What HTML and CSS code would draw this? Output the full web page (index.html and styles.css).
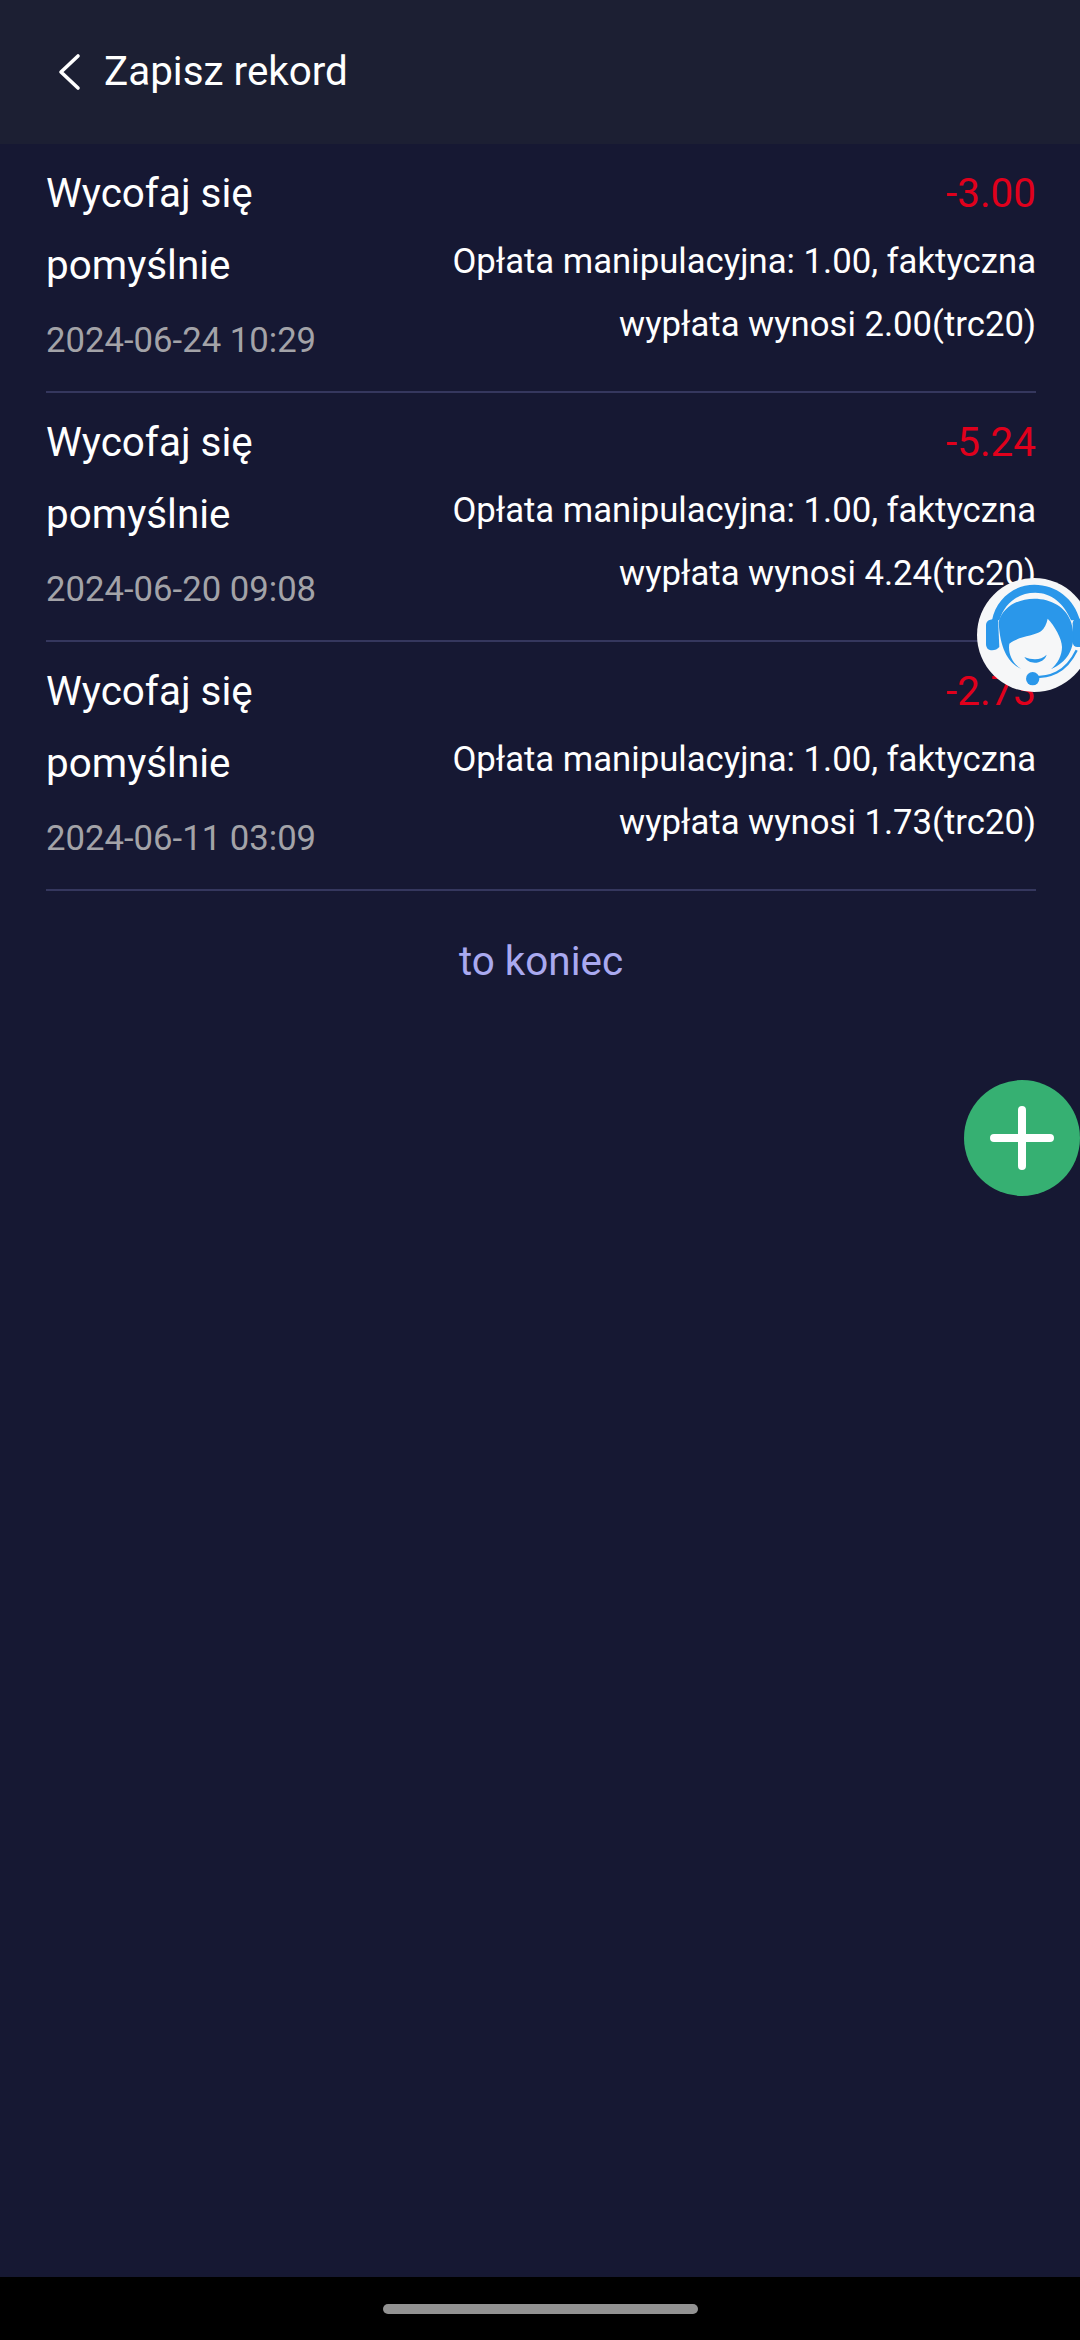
FILE: index.html
```html
<!DOCTYPE html>
<html lang="pl">
<head>
<meta charset="utf-8">
<title>Zapisz rekord</title>
<link rel="stylesheet" href="styles.css">
</head>
<body>
<div class="app">
  <header class="header">
    <svg class="back" viewBox="0 0 24 38" width="24" height="38"><path d="M21 3 L4 19 L21 35" fill="none" stroke="#fff" stroke-width="3.6" stroke-linecap="round" stroke-linejoin="round"/></svg>
    <span class="header-title">Zapisz rekord</span>
  </header>
  <main class="content">
    <div class="row">
      <div class="left">
        <div class="name">Wycofaj się pomyślnie</div>
        <div class="date">2024-06-24 10:29</div>
      </div>
      <div class="right">
        <div class="amount">-3.00</div>
        <div class="note">Opłata manipulacyjna: 1.00, faktyczna wypłata wynosi 2.00(trc20)</div>
      </div>
    </div>
    <div class="row">
      <div class="left">
        <div class="name">Wycofaj się pomyślnie</div>
        <div class="date">2024-06-20 09:08</div>
      </div>
      <div class="right">
        <div class="amount">-5.24</div>
        <div class="note">Opłata manipulacyjna: 1.00, faktyczna wypłata wynosi 4.24(trc20)</div>
      </div>
    </div>
    <div class="row">
      <div class="left">
        <div class="name">Wycofaj się pomyślnie</div>
        <div class="date">2024-06-11 03:09</div>
      </div>
      <div class="right">
        <div class="amount">-2.73</div>
        <div class="note">Opłata manipulacyjna: 1.00, faktyczna wypłata wynosi 1.73(trc20)</div>
      </div>
    </div>
    <div class="end">to koniec</div>
  </main>
  <footer class="navbar"><div class="home-bar"></div></footer>

  <div class="support">
    <svg viewBox="3 8 342 342" width="114" height="114">
      <circle cx="174" cy="179" r="171" fill="#f6f7f8"/>
      <path d="M48 135 C60 70 115 28 175 28 C240 28 295 70 312 135 L285 135 C265 85 225 52 178 52 C125 52 85 85 70 135 Z" fill="#2a97ea"/>
      <path d="M30 150 C30 136 40 130 66 130 L70 215 C60 228 30 232 30 205 Z" fill="#2a97ea"/>
      <rect x="290" y="130" width="60" height="85" rx="14" fill="#2a97ea"/>
      <path d="M68 140 C80 95 125 70 175 70 C225 70 270 95 285 140 C300 190 295 250 225 282 C245 265 258 240 258 215 C258 190 235 150 215 130 C212 145 205 160 195 168 C175 182 130 182 100 205 C95 235 110 265 135 280 C100 265 72 225 68 140 Z" fill="#2a97ea"/>
      <path d="M145 245 C170 255 195 255 212 238 C205 265 160 272 145 245 Z" fill="#2a97ea"/>
      <path d="M170 306 C220 306 268 295 302 225" fill="none" stroke="#2a97ea" stroke-width="7"/>
      <circle cx="170" cy="310" r="20" fill="#2a97ea"/>
    </svg>
  </div>
  <div class="add">
    <svg viewBox="0 0 64 64" width="64" height="64"><path d="M32 4 V60 M4 32 H60" stroke="#fff" stroke-width="8" stroke-linecap="round" fill="none"/></svg>
  </div>
</div>
</body>
</html>
```
FILE: styles.css
```css
* { box-sizing: border-box; }
html, body { margin: 0; padding: 0; }
body { background: #161833; font-family: Roboto, "Liberation Sans", sans-serif; }
.app { position: relative; width: 1080px; height: 2340px; display: flex; flex-direction: column; overflow: hidden; background: #161833; }
.header { height: 144px; flex: none; background: #1c1f33; display: flex; align-items: center; padding-left: 57px; gap: 23px; }
.back { flex: none; display: block; }
.header-title { color: #fff; font-size: 40.4px; line-height: 50px; }
.content { flex: 1; padding: 0 44px 0 46px; }
.row { height: 249px; display: flex; justify-content: space-between; border-bottom: 2px solid #35375e; padding-top: 14px; }
.left { width: 270px; flex: none; }
.name { color: #fff; font-size: 40.4px; line-height: 72px; }
.date { color: #a3a3a8; font-size: 34.7px; line-height: 40px; margin-top: 18px; white-space: nowrap; }
.right { width: 600px; text-align: right; }
.amount { color: #e0001c; font-size: 40.4px; line-height: 72px; }
.note { color: #fff; font-size: 34.7px; line-height: 63px; }
.end { text-align: center; color: #a9a9f0; font-size: 40.4px; line-height: 50px; margin-top: 46px; }
.navbar { height: 63px; flex: none; background: #000; display: flex; justify-content: center; padding-top: 27px; }
.home-bar { width: 315px; height: 10px; border-radius: 5px; background: #929292; }
.support { position: absolute; left: 977px; top: 578px; width: 114px; height: 114px; }
.support svg, .add svg { display: block; }
.add { position: absolute; left: 964px; top: 1080px; width: 116px; height: 116px; border-radius: 50%; background: #36b072; display: flex; align-items: center; justify-content: center; }
```
